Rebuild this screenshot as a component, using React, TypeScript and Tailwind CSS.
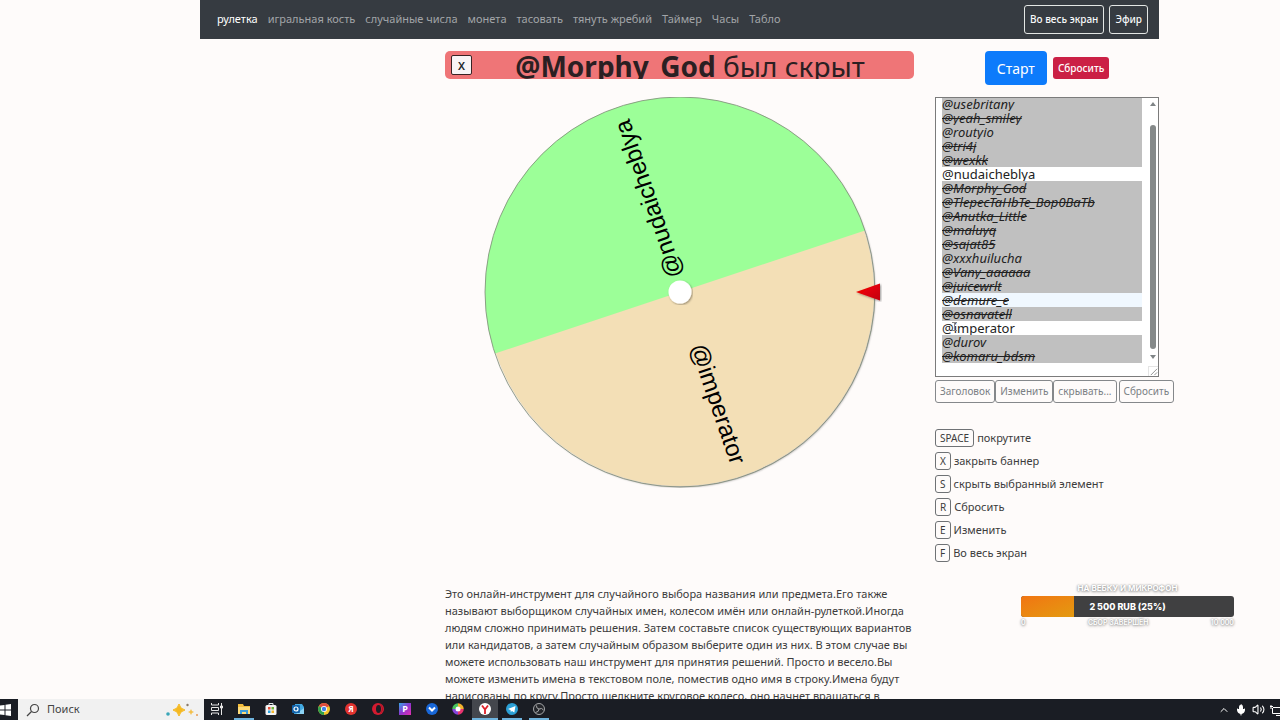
import { useState, type ReactNode } from "react"
import { ChevronUp, Mic, Volume2 } from "lucide-react"
import clsx from "clsx"

interface Entry {
  name: string
  state: "active" | "hidden" | "current"
  struck?: boolean
}

const NAV_ITEMS = [
  "рулетка",
  "игральная кость",
  "случайные числа",
  "монета",
  "тасовать",
  "тянуть жребий",
  "Таймер",
  "Часы",
  "Табло",
]

const ENTRIES: Entry[] = [
  { name: "@usebritany", state: "hidden" },
  { name: "@yeah_smiley", state: "hidden", struck: true },
  { name: "@routyio", state: "hidden" },
  { name: "@tri4j", state: "hidden", struck: true },
  { name: "@wexkk", state: "hidden", struck: true },
  { name: "@nudaicheblya", state: "active" },
  { name: "@Morphy_God", state: "hidden", struck: true },
  { name: "@TlepecTaHbTe_Bop0BaTb", state: "hidden", struck: true },
  { name: "@Anutka_Little", state: "hidden", struck: true },
  { name: "@maluyq", state: "hidden", struck: true },
  { name: "@sajat85", state: "hidden", struck: true },
  { name: "@xxxhuilucha", state: "hidden" },
  { name: "@Vany_aaaaaa", state: "hidden", struck: true },
  { name: "@juicewrlt", state: "hidden", struck: true },
  { name: "@demure_e", state: "current", struck: true },
  { name: "@osnavatell", state: "hidden", struck: true },
  { name: "@imperator", state: "active" },
  { name: "@durov", state: "hidden" },
  { name: "@komaru_bdsm", state: "hidden", struck: true },
]

const SHORTCUTS = [
  { key: "SPACE", label: "покрутите" },
  { key: "X", label: "закрыть баннер" },
  { key: "S", label: "скрыть выбранный элемент" },
  { key: "R", label: "Сбросить" },
  { key: "E", label: "Изменить" },
  { key: "F", label: "Во весь экран" },
]

function Navbar() {
  return (
    <nav className="flex h-[39px] items-center justify-between bg-[#363b41] pl-[17px] pr-[11px]">
      <ul className="flex gap-[10px] text-[11px] whitespace-nowrap">
        {NAV_ITEMS.map((item, i) => (
          <li key={item}>
            <a href="#" className={i === 0 ? "text-white" : "text-[#a2a5a8]"}>
              {item}
            </a>
          </li>
        ))}
      </ul>
      <div className="flex gap-[5px] text-[10px] font-medium text-[#f8f9fa]">
        <button className="h-[29px] rounded-[3px] border border-[#e3e6e4] px-[5px]">Во весь экран</button>
        <button className="h-[29px] rounded-[3px] border border-[#e3e6e4] px-[5px]">Эфир</button>
      </div>
    </nav>
  )
}

function Banner({ onClose }: { onClose: () => void }) {
  return (
    <div className="flex h-[28px] items-start overflow-hidden rounded-[5px] bg-[#ef7577] pl-[6px]">
      <button
        onClick={onClose}
        className="mt-1 h-5 w-[21px] shrink-0 rounded-[2px] border border-[#3a2324] bg-[#f8f5f6] text-[11px] leading-none font-semibold text-[#212529]"
      >
        X
      </button>
      <p className="flex-1 pr-[6px] text-center text-[28px] leading-[30px] whitespace-nowrap text-[#2b1f22]">
        <b className="font-bold">@Morphy_God</b> был скрыт
      </p>
    </div>
  )
}

function Wheel() {
  return (
    <svg viewBox="0 0 469 391" className="block w-full">
      <defs>
        <filter id="wheelShadow" x="-5%" y="-5%" width="110%" height="110%">
          <feDropShadow dx="1" dy="1" stdDeviation="1" floodColor="#000" floodOpacity="0.4" />
        </filter>
        <linearGradient id="pointer" x1="0" y1="0" x2="1" y2="1">
          <stop offset="0" stopColor="#ff0000" />
          <stop offset="1" stopColor="#c00010" />
        </linearGradient>
      </defs>
      <circle cx="235" cy="195" r="194" fill="#f3dfb6" filter="url(#wheelShadow)" />
      <g transform="rotate(-18.4 235 195)">
        <path d="M40 195a195 195 0 0 1 390 0z" fill="#9cff98" />
      </g>
      <circle cx="235" cy="195" r="195" fill="none" stroke="#7d8a76" strokeWidth="0.8" />
      <g className="font-['Liberation_Sans',Arial,sans-serif] text-[24px]" fill="#000" textAnchor="end" dominantBaseline="central">
        <text x="416" y="195" transform="rotate(251 235 195)">@nudaicheblya</text>
        <text x="416" y="195" transform="rotate(71 235 195)">@imperator</text>
      </g>
      <circle cx="235" cy="195" r="11.5" fill="#fff" filter="url(#wheelShadow)" />
      <path d="M411 195l24-8.500v17z" fill="url(#pointer)" filter="url(#wheelShadow)" />
    </svg>
  )
}

function NameList() {
  const [text, setText] = useState("")
  return (
    <div className="relative flex h-[280px] border border-[#7b7b7b] bg-white">
      <div className="flex flex-1 flex-col justify-end overflow-hidden pb-[13px] pl-[6px] text-[13px] leading-[14px] text-[#222]">
        {ENTRIES.map((e) => (
          <div
            key={e.name}
            className={clsx(
              "h-[14px] shrink-0",
              e.state === "hidden" && "bg-[#c0c0c0] italic",
              e.state === "current" && "bg-[#f0f8ff] italic",
              e.struck && "line-through",
            )}
          >
            {e.name}
          </div>
        ))}
      </div>
      <textarea
        aria-label="Имена"
        value={text}
        onChange={(e) => setText(e.target.value)}
        className="absolute inset-0 resize-none bg-transparent pl-[6px] text-[13px] leading-[14px] outline-none [scrollbar-width:none]"
      />
      {/* text cursor */}
      <svg viewBox="0 0 5 9" className="absolute bottom-[45px] left-[16px] h-[9px] w-[5px]" fill="none" stroke="#888">
        <path d="M0 .5h5M2.500 0v9M0 8.500h5" />
      </svg>
      {/* scrollbar */}
      <div className="ml-[6px] flex w-[10px] flex-col items-center pt-1">
        <span className="border-x-[3px] border-b-[4px] border-x-transparent border-b-[#7f8486]" />
        <span className="mt-[19px] h-[224px] w-[6px] rounded-full bg-[#858989]" />
        <span className="mt-[6px] border-x-[3px] border-t-[4px] border-x-transparent border-t-[#7f8486]" />
        <svg viewBox="0 0 10 10" className="mt-auto size-[10px] border-t border-l border-[#e4e4e4]" stroke="#8a8a8a" fill="none">
          <path d="M2 9l7-7M6 9l3-3" />
        </svg>
      </div>
    </div>
  )
}

const smallBtn = "h-[23px] shrink-0 rounded-[3px] border border-[#85888b] px-[4px] text-[10px] text-[#7a7f84]"

function Controls() {
  return (
    <div className="flex whitespace-nowrap">
      <button className={smallBtn}>Заголовок</button>
      <button className={smallBtn}>Изменить</button>
      <button className={smallBtn}>скрывать...</button>
      <button className={clsx(smallBtn, "ml-[2px]")}>Сбросить</button>
    </div>
  )
}

function DonationGoal() {
  const shadow = "[text-shadow:0_0_2px_#888,0_1px_3px_#999]"
  return (
    <div className="absolute right-[46px] bottom-[92px] w-[213px] font-['Inter','Roboto',sans-serif] text-white">
      <p className={clsx("text-center text-[8px] leading-[16px] font-bold", shadow)}>НА ВЕБКУ И МИКРОФОН</p>
      <div className="grid h-[21px] overflow-hidden rounded-[3px] bg-[#404041]">
        <div className="w-1/4 bg-linear-to-br from-[#f17412] to-[#e39a10] [grid-area:1/1]" />
        <p className="self-center text-center text-[9px] font-extrabold [grid-area:1/1]">2 500 RUB (25%)</p>
      </div>
      <div className={clsx("flex justify-between text-[7px] leading-[11px] font-semibold", shadow)}>
        <span>0</span>
        <span>СБОР ЗАВЕРШЁН</span>
        <span>10 000</span>
      </div>
    </div>
  )
}

function Glyph({ children }: { children: ReactNode }) {
  return (
    <svg viewBox="0 0 14 14" className="size-[14px]" fill="none">
      {children}
    </svg>
  )
}

const TASKS: { name: string; open?: boolean; active?: boolean; icon: ReactNode }[] = [
  {
    name: "Представление задач",
    icon: (
      <g stroke="#e6e6e6">
        <path d="M1.500 1v2h7V1M1.500 13v-2h7v2M1.500 5.500h7v3h-7zM11.500 1v12" />
        <path d="M10.500 4h2v2h-2z" fill="#e6e6e6" />
      </g>
    ),
  },
  {
    name: "Проводник",
    open: true,
    icon: (
      <>
        <path d="M1 2h5l1 2h6v8H1z" fill="#f3bd3d" />
        <path d="M1 5h12v7H1z" fill="#fddb79" />
        <path d="M3 12V8h8v4H9v-2H5v2z" fill="#3c9bd8" />
      </>
    ),
  },
  {
    name: "Microsoft Store",
    icon: (
      <>
        <path d="M5 3V1.500h4V3" stroke="#dfe7ea" />
        <rect x="1.500" y="3" width="11" height="10" rx="1.500" fill="#f4f4f4" />
        <path d="M4 5h2.500v2.500H4z" fill="#e8503a" />
        <path d="M7.500 5H10v2.500H7.500z" fill="#6fb53c" />
        <path d="M4 8.500h2.500V11H4z" fill="#2ba0dd" />
        <path d="M7.500 8.500H10V11H7.500z" fill="#f3b52b" />
      </>
    ),
  },
  {
    name: "Outlook",
    icon: (
      <>
        <path d="M4 2h7l2 3v7H3z" fill="#41a8e0" />
        <path d="M5 12l8-6v6z" fill="#8bd2f4" />
        <rect x="1" y="3" width="8" height="8" rx="1" fill="#1364ac" />
        <circle cx="5" cy="7" r="2" stroke="#fff" strokeWidth="1.200" />
      </>
    ),
  },
  {
    name: "Chrome",
    icon: (
      <>
        <circle cx="7" cy="7" r="6" fill="#f5c52c" />
        <path d="M7 7L1.800 4A6 6 0 0 1 12.200 4z" fill="#dd4b3e" />
        <path d="M7 7L1.800 4A6 6 0 0 0 7 13z" fill="#2da04f" />
        <circle cx="7" cy="7" r="3" fill="#fff" />
        <circle cx="7" cy="7" r="2.200" fill="#4080e8" />
      </>
    ),
  },
  {
    name: "Яндекс",
    icon: (
      <>
        <circle cx="7" cy="7" r="6" fill="#e2332f" />
        <text x="7" y="10" fontSize="8" fontWeight="700" fill="#fff" textAnchor="middle">Я</text>
      </>
    ),
  },
  {
    name: "Opera",
    icon: (
      <>
        <circle cx="7" cy="7" r="6" fill="#d31b30" />
        <ellipse cx="7.500" cy="7" rx="2.500" ry="4" fill="#1b1e25" />
        <path d="M9 2a6 6 0 0 1 0 10q4-5 0-10" fill="#8e1423" />
      </>
    ),
  },
  {
    name: "PicsArt",
    icon: (
      <>
        <defs>
          <linearGradient id="pic" x1="0" y1="0" x2="1" y2="1">
            <stop offset="0" stopColor="#35a8e6" />
            <stop offset="0.500" stopColor="#8c35d0" />
            <stop offset="1" stopColor="#e52fb0" />
          </linearGradient>
        </defs>
        <path d="M1 1h12v12H1z" fill="url(#pic)" />
        <text x="7" y="10" fontSize="9" fontWeight="700" fill="#fff" textAnchor="middle">P</text>
      </>
    ),
  },
  {
    name: "Загрузки",
    icon: (
      <>
        <circle cx="7" cy="7" r="6" fill="#1867d8" />
        <path d="M4 5.500l3 3 3-3" stroke="#fff" strokeWidth="2" />
      </>
    ),
  },
  {
    name: "Палитра",
    icon: (
      <g strokeWidth="3.500">
        <path d="M7 3a4 4 0 0 1 4 4" stroke="#f3b32d" />
        <path d="M11 7a4 4 0 0 1-4 4" stroke="#e83370" />
        <path d="M7 11a4 4 0 0 1-4-4" stroke="#8545dc" />
        <path d="M3 7a4 4 0 0 1 4-4" stroke="#48c45c" />
        <circle cx="7" cy="7" r="2.500" fill="#fff" stroke="none" />
      </g>
    ),
  },
  {
    name: "Яндекс Браузер",
    open: true,
    active: true,
    icon: (
      <>
        <circle cx="7" cy="7" r="6" fill="#fff" />
        <path d="M4 3.500l3 4 3-4M7 7v5" stroke="#dc2029" strokeWidth="1.800" />
      </>
    ),
  },
  {
    name: "Telegram",
    open: true,
    icon: (
      <>
        <circle cx="7" cy="7" r="6" fill="#2ba0d6" />
        <path d="M3 7l7.500-3L9.300 10.500 7 9l-1.200 1L5.500 8z" fill="#fff" />
      </>
    ),
  },
  {
    name: "OBS",
    open: true,
    icon: (
      <g stroke="#a5a7a9">
        <circle cx="7" cy="7" r="5.500" fill="#24262b" />
        <path d="M7 7q-3-.5-2.500-3.500M7 7q3-1.500 4.500 1M7 7q0 3-3.500 3.500" />
      </g>
    ),
  },
]

function Taskbar() {
  return (
    <footer className="flex h-[21px] shrink-0 justify-between bg-[#1a1d24]">
      <div className="flex">
        <button aria-label="Пуск" className="flex w-[18px] items-center">
          <svg viewBox="0 0 11 12" className="h-3 w-[11px]" fill="#fff">
            <path d="M0 1.500L4.500 1v4.500H0zM5.500 .8L11 0v5.500H5.500zM0 6.500h4.500V11L0 10.500zM5.500 6.500H11V12l-5.500-.8z" />
          </svg>
        </button>
        <label className="flex w-[186px] items-center bg-[#f1f1f1] pr-[5px] pl-[8px] text-[#444]">
          <svg viewBox="0 0 14 14" className="size-[14px]" fill="none" stroke="#444" strokeWidth="1.200">
            <circle cx="8.500" cy="5.500" r="4" />
            <path d="M5.500 8.500L1 13" />
          </svg>
          <input
            placeholder="Поиск"
            aria-label="Поиск"
            className="ml-[7px] min-w-0 flex-1 bg-transparent text-[11px] outline-none placeholder:text-[#444]"
          />
          <svg viewBox="0 0 34 14" className="h-[14px] w-[34px]">
            <path d="M14 1q1 5 6 6-5 1-6 6-1-5-6-6 5-1 6-6z" fill="#f5b921" stroke="#f5b921" />
            <path d="M26 6q.5 2.500 3 3-2.500.5-3 3-.5-2.500-3-3 2.500-.5 3-3z" fill="#f3c04c" />
            <circle cx="3" cy="11" r="1.800" fill="#3aa6b8" />
            <circle cx="22.500" cy="2" r="1.200" fill="#8b7a68" />
            <circle cx="32" cy="12" r="1" fill="#e59a54" />
          </svg>
        </label>
        <div className="flex w-[348px]">
          {TASKS.map((t) => (
            <button
              key={t.name}
              aria-label={t.name}
              className={clsx("flex flex-1 flex-col items-center justify-between pt-[3px]", t.active && "bg-[#44474d]")}
            >
              <Glyph>{t.icon}</Glyph>
              {t.open && <span className={clsx("h-[2px] bg-[#6fb4de]", t.active ? "w-full" : "w-5")} />}
            </button>
          ))}
        </div>
      </div>
      <div className="flex items-center gap-[5px] overflow-hidden text-white">
        <ChevronUp className="size-3" />
        <Mic className="size-3" fill="currentColor" />
        <Volume2 className="size-[13px]" />
        <svg viewBox="0 0 10 12" className="h-3 w-[10px]" fill="none" stroke="#fff">
          <path d="M1 1v4M0 2.500h3M3 3.500h7M2.500 4v5.500H10M6 11.500h4" />
        </svg>
      </div>
    </footer>
  )
}

export default function App() {
  const [bannerOpen, setBannerOpen] = useState(true)

  return (
    <div className="relative flex h-screen flex-col overflow-hidden bg-[#fefbfa] font-['Noto_Sans','Open_Sans',sans-serif] text-[#3c3c3c]">
      <div className="min-h-0 flex-1 overflow-hidden pr-[121px] pl-[200px]">
        <Navbar />
        <div className="flex gap-[21px] pt-3 pl-[245px]">
          <main className="min-w-0 flex-1">
            <div className="h-[46px]">{bannerOpen && <Banner onClose={() => setBannerOpen(false)} />}</div>
            <Wheel />
            <p className="mt-[97px] text-[11px] leading-[17px]">
              Это онлайн-инструмент для случайного выбора названия или предмета.Его также называют выборщиком
              случайных имен, колесом имён или онлайн-рулеткой.Иногда людям сложно принимать решения. Затем
              составьте список существующих вариантов или кандидатов, а затем случайным образом выберите один из
              них. В этом случае вы можете использовать наш инструмент для принятия решений. Просто и весело.Вы
              можете изменить имена в текстовом поле, поместив одно имя в строку.Имена будут нарисованы по
              кругу.Просто щелкните круговое колесо, оно начнет вращаться в
            </p>
          </main>

          <aside className="w-[224px] shrink-0">
            <div className="flex h-[46px] items-start justify-center gap-[6px]">
              <button className="h-[34px] rounded-[4px] bg-[#0d7bfb] px-3 text-[14px] text-white">Старт</button>
              <button className="mt-[6px] h-[22px] rounded-[3px] bg-[#cb2045] px-[5px] text-[10px] font-medium text-white">
                Сбросить
              </button>
            </div>
            <NameList />
            <div className="mt-[3px]">
              <Controls />
            </div>
            <ul className="mt-[26px] flex flex-col gap-[5px] text-[11px]">
              {SHORTCUTS.map((s) => (
                <li key={s.key} className="flex h-[18px] items-center gap-[3px]">
                  <kbd className="flex h-[18px] items-center rounded-[3px] border border-[#6f7275] px-[4px] font-['Noto_Sans',sans-serif] text-[10px]">
                    {s.key}
                  </kbd>
                  {s.label}
                </li>
              ))}
            </ul>
          </aside>
        </div>
      </div>
      <DonationGoal />
      <Taskbar />
    </div>
  )
}
